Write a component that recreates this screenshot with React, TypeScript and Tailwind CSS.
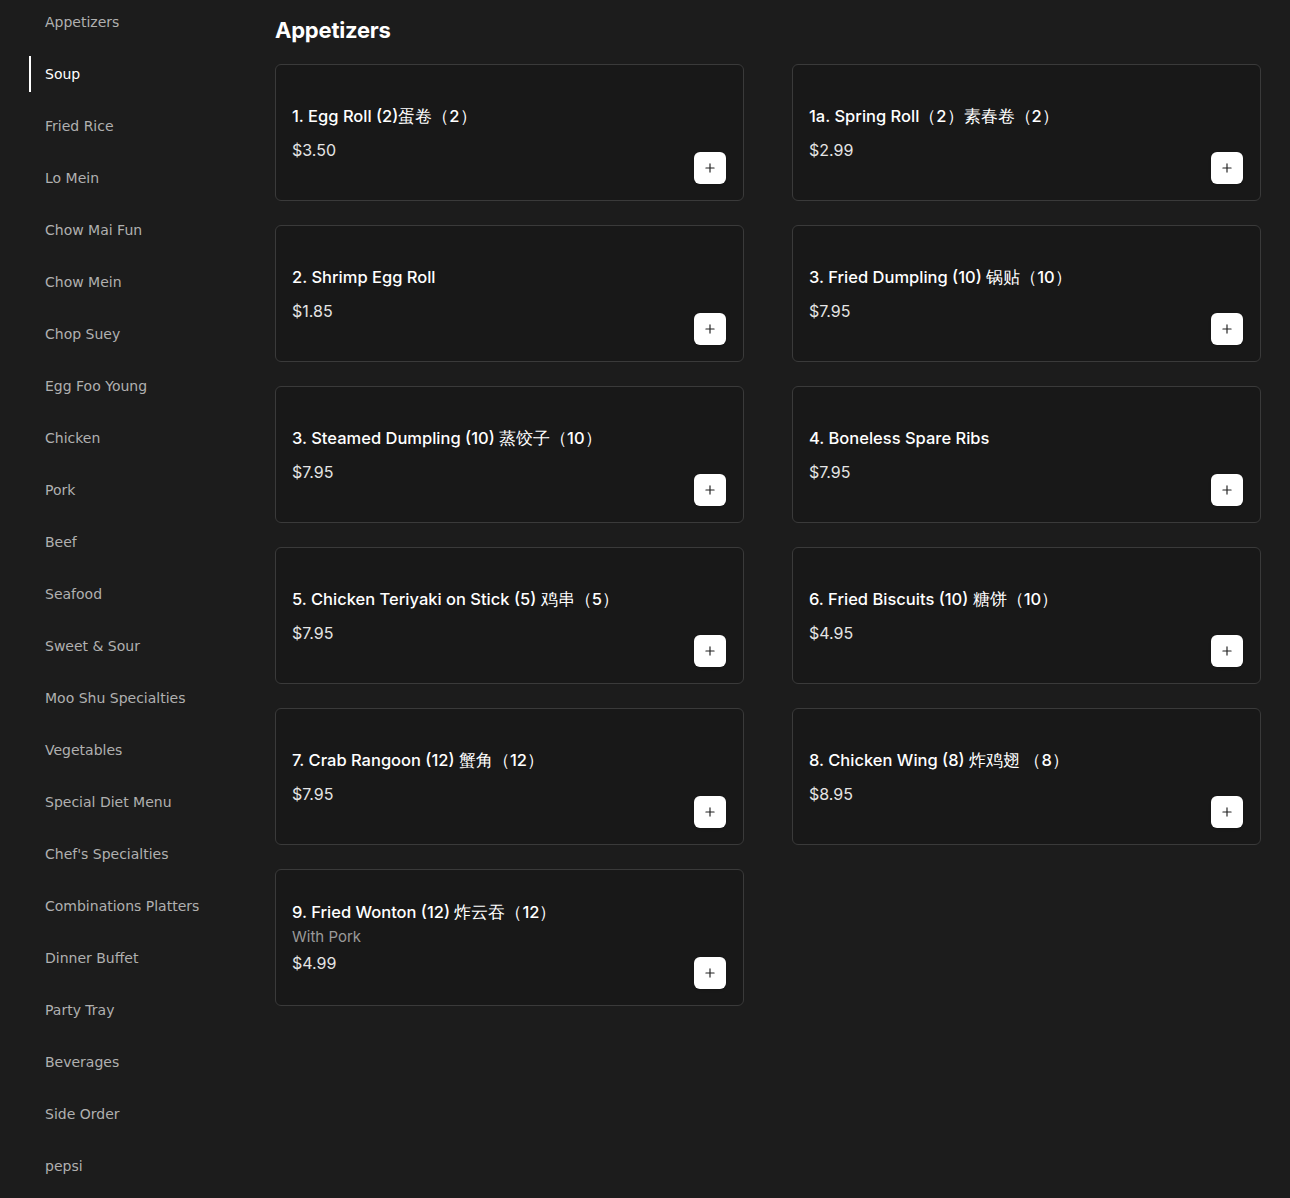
import { Plus } from 'lucide-react'

const categories = [
  'Appetizers',
  'Soup',
  'Fried Rice',
  'Lo Mein',
  'Chow Mai Fun',
  'Chow Mein',
  'Chop Suey',
  'Egg Foo Young',
  'Chicken',
  'Pork',
  'Beef',
  'Seafood',
  'Sweet & Sour',
  'Moo Shu Specialties',
  'Vegetables',
  'Special Diet Menu',
  "Chef's Specialties",
  'Combinations Platters',
  'Dinner Buffet',
  'Party Tray',
  'Beverages',
  'Side Order',
  'pepsi',
]

const items = [
  { name: '1. Egg Roll (2)蛋卷（2）', price: '$3.50' },
  { name: '1a. Spring Roll（2）素春卷（2）', price: '$2.99' },
  { name: '2. Shrimp Egg Roll', price: '$1.85' },
  { name: '3. Fried Dumpling (10) 锅贴（10）', price: '$7.95' },
  { name: '3. Steamed Dumpling (10) 蒸饺子（10）', price: '$7.95' },
  { name: '4. Boneless Spare Ribs', price: '$7.95' },
  { name: '5. Chicken Teriyaki on Stick (5) 鸡串（5）', price: '$7.95' },
  { name: '6. Fried Biscuits (10) 糖饼（10）', price: '$4.95' },
  { name: '7. Crab Rangoon (12) 蟹角（12）', price: '$7.95' },
  { name: '8. Chicken Wing (8) 炸鸡翅 （8）', price: '$8.95' },
  { name: '9. Fried Wonton (12) 炸云吞（12）', price: '$4.99', note: 'With Pork' },
]

const active = 'Soup'

export default function App() {
  return (
    <div className="min-h-[1198px] w-full bg-[#1c1c1c] flex">
      {/* Category sidebar */}
      <aside className="w-[260px] shrink-0 pt-1 pl-[29px]">
        <ul className="flex flex-col gap-4">
          {categories.map((c) => (
            <li
              key={c}
              className={`h-9 flex items-center pl-[14px] text-[14px] font-['DejaVu_Sans',sans-serif] ${
                c === active
                  ? 'border-l-2 border-white text-white font-medium'
                  : 'border-l-2 border-transparent text-[#b0b0b0]'
              }`}
            >
              {c}
            </li>
          ))}
        </ul>
      </aside>

      {/* Menu items */}
      <main className="flex-1 pl-[15px] pr-[29px] pt-[14px] font-['Inter',sans-serif]">
        <h2 className="text-[22px] leading-8 font-bold text-white tracking-[-0.01em] mb-[18px]">Appetizers</h2>
        <div className="grid grid-cols-2 gap-x-12 gap-y-6">
          {items.map((it) => (
            <div
              key={it.name}
              className="h-[137px] bg-[#181818] border border-[#3a3a3a] rounded-md pl-4 pr-[17px] pt-4 pb-4 flex"
            >
              <div className="flex-1 flex flex-col justify-center">
                <div className="text-[16.5px] leading-6 font-medium text-white">{it.name}</div>
                {it.note && <div className="text-[15px] leading-6 text-[#9a9a9a] mt-[1px]">{it.note}</div>}
                <div className={`text-[16px] leading-6 font-normal text-[#e4e4e4] ${it.note ? 'mt-[2px]' : 'mt-[10px]'}`}>
                  {it.price}
                </div>
              </div>
              <button className="self-end w-8 h-8 rounded-[6px] bg-white shadow-sm flex items-center justify-center">
                <Plus className="w-[14px] h-[14px] text-[#222]" strokeWidth={2} />
              </button>
            </div>
          ))}
        </div>
      </main>
    </div>
  )
}
